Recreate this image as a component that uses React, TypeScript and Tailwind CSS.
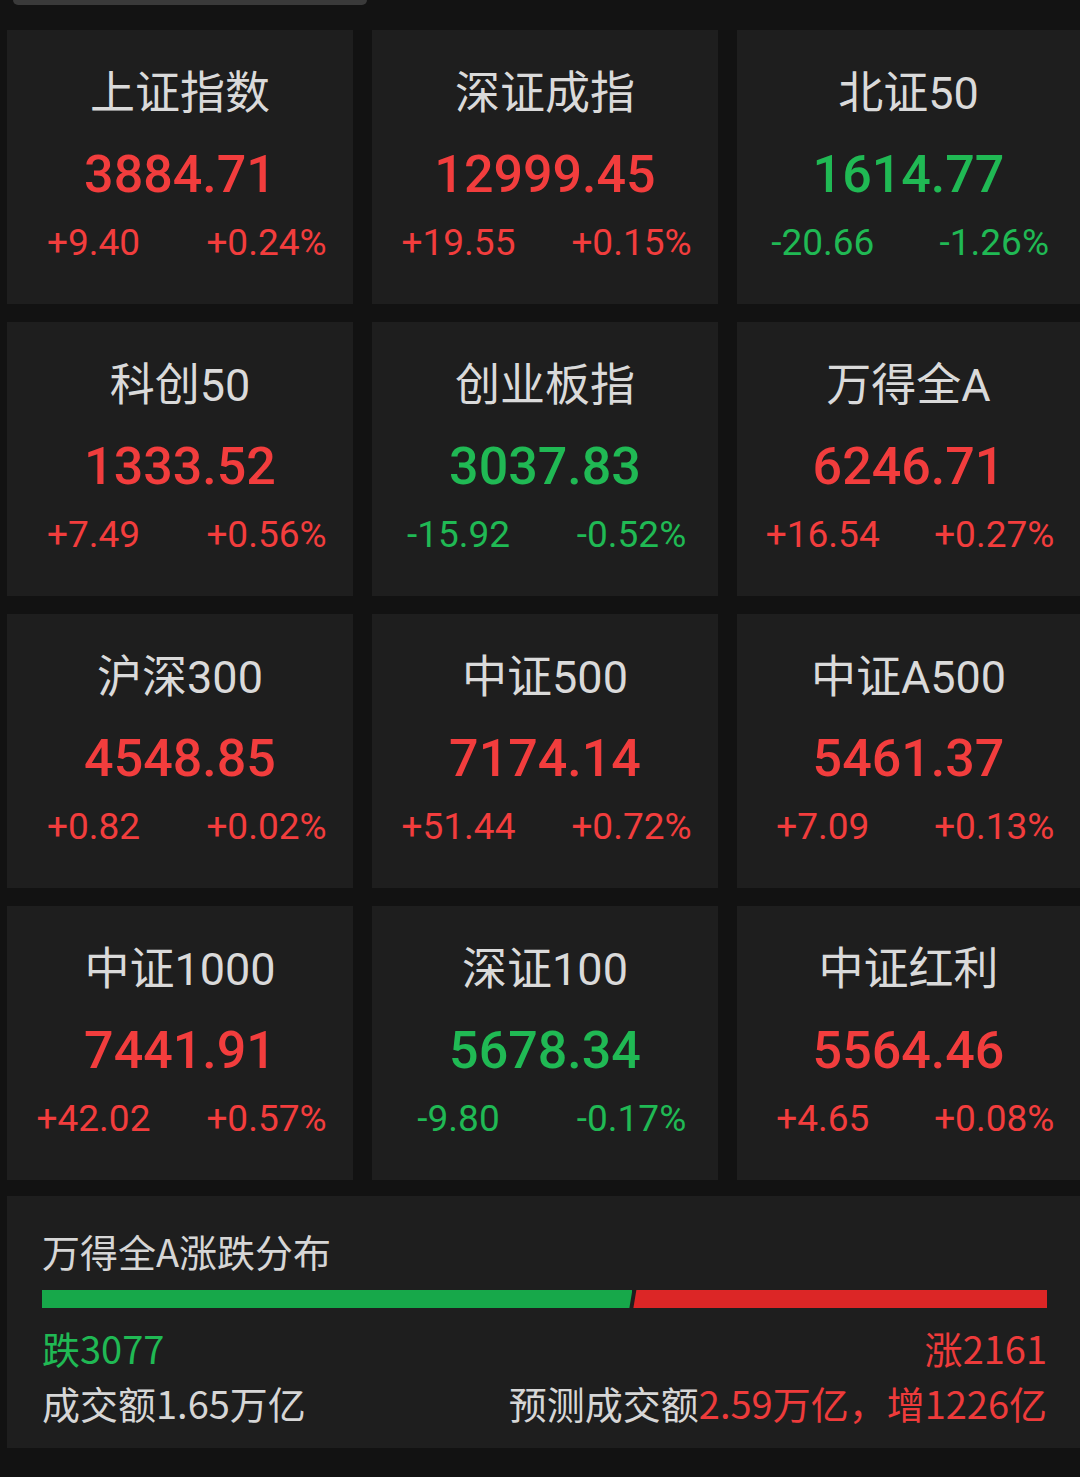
import React from 'react';

interface IndexItem {
  name: string;
  value: string;
  change: string;
  pct: string;
  up: boolean;
}

const indices: IndexItem[] = [
  { name: '上证指数', value: '3884.71', change: '+9.40', pct: '+0.24%', up: true },
  { name: '深证成指', value: '12999.45', change: '+19.55', pct: '+0.15%', up: true },
  { name: '北证50', value: '1614.77', change: '-20.66', pct: '-1.26%', up: false },
  { name: '科创50', value: '1333.52', change: '+7.49', pct: '+0.56%', up: true },
  { name: '创业板指', value: '3037.83', change: '-15.92', pct: '-0.52%', up: false },
  { name: '万得全A', value: '6246.71', change: '+16.54', pct: '+0.27%', up: true },
  { name: '沪深300', value: '4548.85', change: '+0.82', pct: '+0.02%', up: true },
  { name: '中证500', value: '7174.14', change: '+51.44', pct: '+0.72%', up: true },
  { name: '中证A500', value: '5461.37', change: '+7.09', pct: '+0.13%', up: true },
  { name: '中证1000', value: '7441.91', change: '+42.02', pct: '+0.57%', up: true },
  { name: '深证100', value: '5678.34', change: '-9.80', pct: '-0.17%', up: false },
  { name: '中证红利', value: '5564.46', change: '+4.65', pct: '+0.08%', up: true },
];

const down = 3077;
const rise = 2161;

export default function App() {
  const downPct = (down / (down + rise)) * 100;

  return (
    <div className="min-h-[1477px] w-[1080px] overflow-hidden bg-[#121212] font-['Roboto','Noto_Sans_CJK_SC',sans-serif]">
      {/* Tab indicator strip */}
      <div className="h-[30px] bg-[#131313]">
        <div className="ml-[13px] h-[5px] w-[354px] rounded-b-md bg-[#3a3a3a]" />
      </div>

      {/* Index cards */}
      <div className="grid grid-cols-[346px_346px_343px] gap-x-[19px] gap-y-[18px] pl-[7px]">
        {indices.map((item) => (
          <IndexCard key={item.name} item={item} />
        ))}
      </div>

      {/* Advance / decline distribution */}
      <div className="ml-[7px] mt-[16px] h-[252px] bg-[#1e1e1e] pl-[35px] pr-[33px] pt-[35px] text-[38px] font-['Noto_Sans_CJK_SC',sans-serif]">
        <div className="leading-[40px] text-[#d6d6d6]">万得全A涨跌分布</div>
        <div className="mt-[19px] flex h-[18px]">
          <div className="h-full bg-[#17a84a]" style={{ width: `${downPct}%`, clipPath: 'polygon(0 0, 100% 0, calc(100% - 3px) 100%, 0 100%)' }} />
          <div className="h-full flex-1 bg-[#dc2626]" style={{ clipPath: 'polygon(3px 0, 100% 0, 100% 100%, 0 100%)', marginLeft: '1px' }} />
        </div>
        <div className="mt-[18px] flex justify-between leading-[44px]">
          <span className="text-[#20b954]">跌{down}</span>
          <span className="text-[#ee3b3b]">涨{rise}</span>
        </div>
        <div className="mt-[11px] flex justify-between leading-[44px]">
          <span className="text-[#d6d6d6]">成交额1.65万亿</span>
          <span className="text-[#d6d6d6]">
            预测成交额<span className="text-[#ee3b3b]">2.59万亿，增1226亿</span>
          </span>
        </div>
      </div>
    </div>
  );
}

interface IndexCardProps {
  item: IndexItem;
}

function IndexCard({ item }: IndexCardProps) {
  const color = item.up ? 'text-[#f23d3d]' : 'text-[#20b954]';
  return (
    <div className="flex h-[274px] flex-col bg-[#1e1e1e] pt-[42px] text-center">
      <div className="text-[45px] leading-[44px] text-[#dadada]">{item.name}</div>
      <div className={`mt-[29px] text-[52px] font-medium leading-[60px] ${color}`}>{item.value}</div>
      <div className={`mt-[18px] grid grid-cols-2 text-[37px] leading-[40px] ${color}`}>
        <span>{item.change}</span>
        <span>{item.pct}</span>
      </div>
    </div>
  );
}
